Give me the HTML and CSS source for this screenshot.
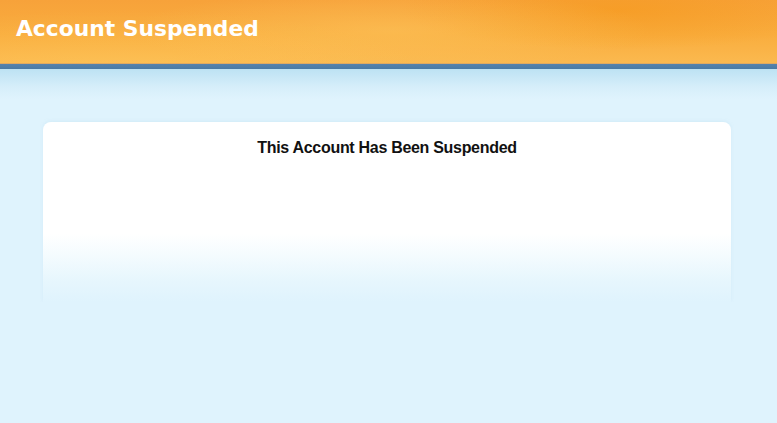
FILE: index.html
```html
<!DOCTYPE html>
<html lang="en">
<head>
    <meta charset="UTF-8">
    <meta name="viewport" content="width=device-width, initial-scale=1.0">
    <title>Account Suspended</title>
    <link rel="stylesheet" href="styles.css">
</head>
<body>
    <div class="header">
        <h1>Account Suspended</h1>
    </div>
    <div class="header-bar"></div>
    <div class="content">
        <div class="box">
            <h2>This Account Has Been Suspended</h2>
        </div>
    </div>
</body>
</html>
```

FILE: styles.css
```css
body {
    margin: 0;
    background-color: #dff3fd; /* Light blue page */
    font-family: "Liberation Sans", Arial, sans-serif;
}
.header {
    height: 63px;
    background-color: #f8a634;
    background-image:
        radial-gradient(ellipse 260px 40px at 390px 30px, rgba(255, 210, 110, 0.35), transparent),
        radial-gradient(ellipse 300px 60px at 120px 70px, rgba(255, 200, 90, 0.45), transparent),
        radial-gradient(ellipse 220px 40px at 620px 10px, rgba(245, 150, 20, 0.5), transparent),
        linear-gradient(to bottom, #f7a23a 0%, #f9ad3e 55%, #fbb94f 100%);
    box-sizing: border-box;
    padding: 15px 0 0 16px;
}
.header h1 {
    margin: 0;
    font-family: "DejaVu Sans", sans-serif;
    font-size: 21.8px;
    font-weight: bold;
    color: #fff;
    line-height: 28px;
}
.header-bar {
    height: 6px;
    background: linear-gradient(to bottom, #5683ad, #4a7aa4);
    border-top: 1px solid #e0a960;
    box-sizing: border-box;
}
.content {
    background: linear-gradient(to bottom, #bde2f3 0px, #d6eefa 18px, #dff3fd 30px);
    padding: 53px 46px 0 43px;
}
.box {
    height: 180px;
    border-radius: 8px 8px 0 0;
    background: linear-gradient(to bottom, #fff 0px, #fff 112px, #f3fbfe 135px, #e6f6fd 160px, #dff3fd 180px);
    box-shadow: 0 -1px 3px rgba(200, 230, 245, 0.5);
    text-align: center;
}
.box h2 {
    margin: 0;
    padding-top: 16px;
    font-size: 16px;
    font-weight: bold;
    letter-spacing: -0.3px;
    color: #111;
    line-height: 20px;
}
```
